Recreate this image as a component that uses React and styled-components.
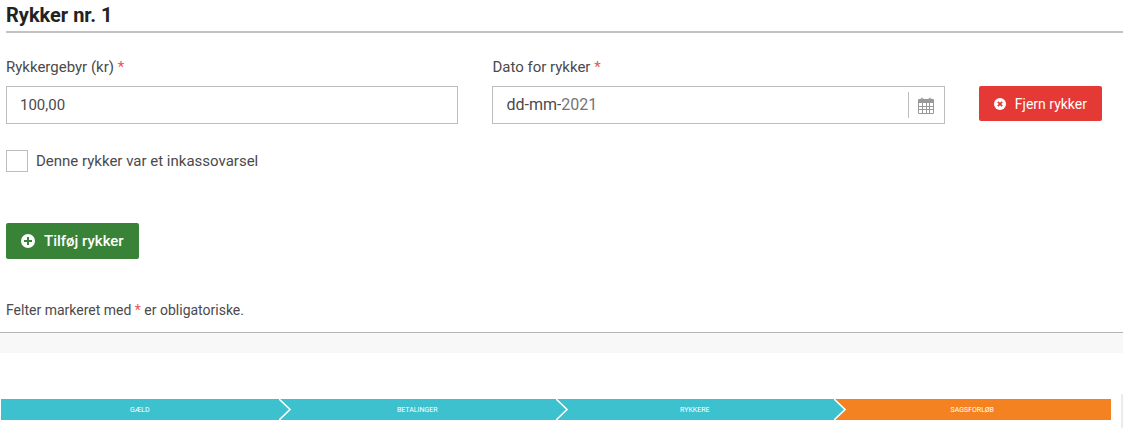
import { useState } from 'react';
import styled, { createGlobalStyle } from 'styled-components';

const GlobalStyle = createGlobalStyle`
  * {
    box-sizing: border-box;
  }

  body {
    margin: 0;
    background: #fff;
    color: #4a4a4a;
    font-family: Roboto, 'Liberation Sans', sans-serif;
    font-size: 15px;
    line-height: 20px;
  }

  input,
  button {
    font: inherit;
    color: inherit;
  }
`;

const Page = styled.div`
  padding-right: 7px;
`;

const Form = styled.form`
  padding-left: 6px;
  border-bottom: 1px solid #b5b5b5;
`;

const Title = styled.h2`
  margin: 0;
  padding: 5px 0 6px;
  border-bottom: 2px solid #c2c2c2;
  color: #222;
  font-size: 20px;
  font-weight: 700;
  line-height: 20px;
`;

const Fields = styled.div`
  display: grid;
  grid-template-columns: 1fr 1fr auto;
  align-items: start;
  column-gap: 34px;
  padding: 24px 21px 0 0;
`;

const Label = styled.label`
  display: block;
  margin-bottom: 9px;
`;

const Required = styled.span`
  color: #ea5550;
`;

const inputBorder = '1px solid #bdbdbd';

const TextInput = styled.input`
  display: block;
  width: 100%;
  height: 38px;
  padding: 0 13px;
  border: ${inputBorder};
  outline: none;
`;

const DateBox = styled.div`
  display: flex;
  align-items: center;
  height: 38px;
  padding: 0 0 0 13px;
  border: ${inputBorder};
`;

const DatePart = styled.input`
  field-sizing: content;
  padding: 0;
  border: 0;
  outline: none;
  background: none;
  color: ${({ $muted }) => ($muted ? '#757575' : '#4a4a4a')};
  font-size: 16px;
`;

const CalendarButton = styled.button`
  display: flex;
  align-items: center;
  justify-content: center;
  width: 36px;
  height: 26px;
  margin-left: auto;
  padding: 0;
  border: 0;
  border-left: 1px solid #bdbdbd;
  background: none;
  color: #999;
`;

const Button = styled.button`
  display: inline-flex;
  align-items: center;
  gap: 9px;
  height: ${({ $height }) => $height}px;
  padding: 0 15px;
  border: 0;
  border-radius: 2px;
  background: ${({ $color }) => $color};
  color: #fff;
  font-size: ${({ $fontSize }) => $fontSize}px;
  font-weight: ${({ $weight }) => $weight};
  white-space: nowrap;
  cursor: pointer;
`;

const RemoveSlot = styled.div`
  display: flex;
  padding-top: 29px;
`;

const CheckLabel = styled.label`
  display: flex;
  align-items: center;
  gap: 8px;
  width: max-content;
  margin-top: 26px;
`;

const Checkbox = styled.input`
  appearance: none;
  width: 22px;
  height: 22px;
  margin: 0;
  border: ${inputBorder};

  &:checked {
    background: #388338;
  }
`;

const Actions = styled.div`
  display: flex;
  padding-top: 51px;
`;

const Note = styled.p`
  margin: 0;
  padding: 41px 0 12px;
  font-size: 14px;
`;

const Band = styled.div`
  height: 20px;
  background: #f8f8f8;
`;

const Progress = styled.nav`
  margin-top: 41px;
  padding: 5px 10px 8px 1px;
  border-right: 2px solid #ebebeb;
`;

const Steps = styled.ol`
  display: flex;
  margin: 0;
  padding: 0;
  list-style: none;
`;

const Step = styled.li`
  display: flex;
  flex: 1;
  align-items: center;
  height: 21px;
  background: ${({ $active }) => ($active ? '#f58220' : '#3ec1cf')};
  color: #fff;
  font-size: 7px;
  line-height: 10px;

  & > a {
    flex: 1;
    color: inherit;
    text-align: center;
    text-decoration: none;
  }
`;

// the arrow reaches into the next step, so it takes no room of its own
const Arrow = styled.svg`
  position: relative;
  flex: none;
  width: 14px;
  height: 21px;
  margin-right: -14px;
`;

const CircleIcon = ({ size, children }) => (
  <svg width={size} height={size} viewBox="0 0 14 14" aria-hidden="true">
    <circle cx="7" cy="7" r="7" fill="#fff" />
    {children}
  </svg>
);

const CalendarIcon = () => (
  <svg width="16" height="17" viewBox="0 0 16 17" aria-hidden="true">
    <rect x="2.500" y="0.500" width="3" height="4" rx="1.500" fill="#b5b5b5" />
    <rect x="10.500" y="0.500" width="3" height="4" rx="1.500" fill="#b5b5b5" />
    <path
      fill="currentColor"
      fillRule="evenodd"
      d="M1 2h14a1 1 0 0 1 1 1v13a1 1 0 0 1-1 1H1a1 1 0 0 1-1-1V3a1 1 0 0 1 1-1ZM1 6v3h3V6ZM5 6v3h3V6ZM9 6v3h2V6ZM12 6v3h3V6ZM1 10v2h3v-2ZM5 10v2h3v-2ZM9 10v2h2v-2ZM12 10v2h3v-2ZM1 13v3h3v-3ZM5 13v3h3v-3ZM9 13v3h2v-3ZM12 13v3h3v-3Z"
    />
  </svg>
);

const steps = ['GÆLD', 'BETALINGER', 'RYKKERE', 'SAGSFORLØB'];

const App = () => {
  const [fee, setFee] = useState('100,00');
  const [dayMonth, setDayMonth] = useState('dd-mm-');
  const [year, setYear] = useState('2021');
  const [isWarning, setIsWarning] = useState(false);
  const activeStep = steps.length - 1;

  return (
    <>
      <GlobalStyle />
      <Page>
        <Form onSubmit={(event) => event.preventDefault()}>
          <Title>Rykker nr. 1</Title>
          <Fields>
            <div>
              <Label htmlFor="fee">
                Rykkergebyr (kr) <Required>*</Required>
              </Label>
              <TextInput
                id="fee"
                value={fee}
                onChange={({ target }) => setFee(target.value)}
              />
            </div>
            <div>
              <Label htmlFor="date">
                Dato for rykker <Required>*</Required>
              </Label>
              <DateBox>
                <DatePart
                  id="date"
                  value={dayMonth}
                  onChange={({ target }) => setDayMonth(target.value)}
                />
                <DatePart
                  $muted
                  aria-label="År"
                  value={year}
                  onChange={({ target }) => setYear(target.value)}
                />
                <CalendarButton type="button" aria-label="Vælg dato">
                  <CalendarIcon />
                </CalendarButton>
              </DateBox>
            </div>
            <RemoveSlot>
              <Button
                type="button"
                $color="#e53935"
                $height={35}
                $fontSize={14}
                $weight={400}
              >
                <CircleIcon size={12}>
                  <path
                    d="M4.500 4.500l5 5M9.500 4.500l-5 5"
                    stroke="#e53935"
                    strokeWidth="2"
                  />
                </CircleIcon>
                Fjern rykker
              </Button>
            </RemoveSlot>
          </Fields>
          <CheckLabel>
            <Checkbox
              type="checkbox"
              checked={isWarning}
              onChange={({ target }) => setIsWarning(target.checked)}
            />
            Denne rykker var et inkassovarsel
          </CheckLabel>
          <Actions>
            <Button
              type="button"
              $color="#388338"
              $height={36}
              $fontSize={15}
              $weight={500}
            >
              <CircleIcon size={14}>
                <path d="M7 3v8M3 7h8" stroke="#388338" strokeWidth="2" />
              </CircleIcon>
              Tilføj rykker
            </Button>
          </Actions>
          <Note>
            Felter markeret med <Required>*</Required> er obligatoriske.
          </Note>
        </Form>
        <Band />
        <Progress aria-label="Trin">
          <Steps>
            {steps.map((step, index) => (
              <Step key={step} $active={index === activeStep}>
                <a href={`#${step.toLowerCase()}`}>{step}</a>
                {index < activeStep && (
                  <Arrow viewBox="0 0 14 21" aria-hidden="true">
                    <path d="M0 0l11 10.500L0 21z" fill="#3ec1cf" />
                    <path
                      d="M0 0l11 10.500L0 21"
                      fill="none"
                      stroke="#fff"
                      strokeWidth="1.600"
                    />
                  </Arrow>
                )}
              </Step>
            ))}
          </Steps>
        </Progress>
      </Page>
    </>
  );
};

export default App;
